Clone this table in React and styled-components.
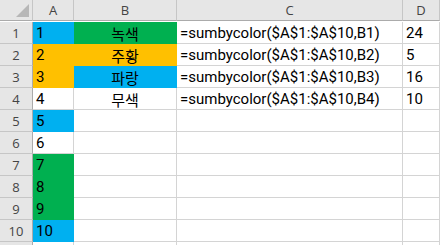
import React from "react";
import styled, { createGlobalStyle } from "styled-components";

const GlobalStyle = createGlobalStyle`
  body {
    margin: 0;
    background: #ffffff;
    font-family: Roboto, "Noto Sans CJK KR", sans-serif;
  }
`;

const COLORS = {
  blue: "#00b0f0",
  green: "#00b050",
  orange: "#ffc000",
};

const Sheet = styled.div`
  display: grid;
  grid-template-columns: 33px 41px 103px 226px 1fr;
  grid-auto-rows: 22px;
  width: 440px;
  height: 245px;
  overflow: hidden;
  background: #ffffff;
`;

const Corner = styled.div`
  position: relative;
  height: 21px;
  background: #e6e6e6;
  border-right: 1px solid #c6c6c6;
  border-bottom: 1px solid #ababab;
  box-sizing: border-box;

  &::after {
    content: "";
    position: absolute;
    right: 3px;
    bottom: 3px;
    width: 0;
    height: 0;
    border-left: 13px solid transparent;
    border-bottom: 13px solid #b7b7b7;
  }
`;

const ColHead = styled.div`
  height: 21px;
  display: flex;
  align-items: center;
  justify-content: center;
  background: #e6e6e6;
  border-right: 1px solid #c6c6c6;
  border-bottom: 1px solid #ababab;
  box-sizing: border-box;
  font-family: "Open Sans", "Noto Sans", sans-serif;
  font-size: 13px;
  color: #444444;
`;

const RowHead = styled.div`
  display: flex;
  align-items: center;
  justify-content: center;
  padding-top: 1px;
  background: #e6e6e6;
  border-right: 1px solid #ababab;
  border-bottom: 1px solid #c6c6c6;
  box-sizing: border-box;
  font-family: "Open Sans", "Noto Sans", sans-serif;
  font-size: 13px;
  color: #444444;
`;

const Cell = styled.div`
  display: flex;
  align-items: center;
  justify-content: ${(p) => (p.$center ? "center" : "flex-start")};
  padding: 1px 3px 0 3px;
  background: ${(p) => (p.$fill ? COLORS[p.$fill] : "#ffffff")};
  border-right: 1px solid ${(p) => (p.$fill ? COLORS[p.$fill] : "#d4d4d4")};
  border-bottom: 1px solid ${(p) => (p.$fill ? COLORS[p.$fill] : "#d4d4d4")};
  box-sizing: border-box;
  font-size: 15px;
  color: #000000;
  white-space: nowrap;
  overflow: hidden;
`;

const aFills = ["blue", "orange", "orange", null, "blue", null, "green", "green", "green", "blue"];
const bRows = [
  { label: "녹색", fill: "green", d: "24" },
  { label: "주황", fill: "orange", d: "5" },
  { label: "파랑", fill: "blue", d: "16" },
  { label: "무색", fill: null, d: "10" },
];

function App() {
  const rows = Array.from({ length: 11 }, (_, i) => i + 1);

  return (
    <>
      <GlobalStyle />
      <Sheet>
        <Corner />
        <ColHead>A</ColHead>
        <ColHead>B</ColHead>
        <ColHead>C</ColHead>
        <ColHead>D</ColHead>

        {rows.map((n) => {
          const b = bRows[n - 1];
          return (
            <React.Fragment key={n}>
              <RowHead>{n <= 10 ? n : ""}</RowHead>
              <Cell $fill={aFills[n - 1]}>{n <= 10 ? n : ""}</Cell>
              <Cell $fill={b?.fill} $center>{b?.label}</Cell>
              <Cell>{b ? `=sumbycolor($A$1:$A$10,B${n})` : ""}</Cell>
              <Cell>{b?.d}</Cell>
            </React.Fragment>
          );
        })}
      </Sheet>
    </>
  );
}

export default App;
